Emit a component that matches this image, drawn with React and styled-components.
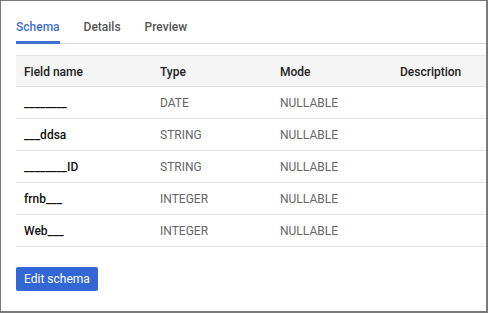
import styled, { createGlobalStyle } from "styled-components";

const GlobalStyle = createGlobalStyle`
  html, body {
    margin: 0;
    padding: 0;
    background: #fff;
  }
  body {
    font-family: Roboto, "Liberation Sans", Arial, sans-serif;
  }
`;

const Frame = styled.div`
  box-sizing: border-box;
  width: 488px;
  height: 313px;
  border: 1px solid #7a7a7a;
  border-right-width: 2px;
  border-bottom-width: 2px;
  padding: 0 0 0 15px;
  display: flex;
  flex-direction: column;
`;

const Tabs = styled.div`
  display: flex;
  gap: 24px;
  border-bottom: 1px solid #dadada;
  height: 43px;
  box-sizing: border-box;
`;

const Tab = styled.div`
  font-size: 12px;
  font-weight: 500;
  color: ${(p) => (p.$active ? "#3f6fd1" : "#555")};
  padding-top: 19px;
  border-bottom: 3px solid ${(p) => (p.$active ? "#3f6fd1" : "transparent")};
  margin-bottom: -1px;
  box-sizing: border-box;
`;

const Table = styled.div`
  margin-top: 11px;
  display: flex;
  flex-direction: column;
`;

const Row = styled.div`
  display: grid;
  grid-template-columns: 136px 120px 120px 1fr;
  height: 32px;
  align-items: center;
  padding-left: 8px;
  box-sizing: border-box;
  border-bottom: 1px solid #e2e2e2;
  background: ${(p) => (p.$head ? "#f5f5f5" : "#fff")};
  border-top: ${(p) => (p.$head ? "1px solid #e6e6e6" : "none")};
`;

const HeadCell = styled.div`
  font-size: 12px;
  font-weight: 500;
  color: #222;
  padding-top: 1px;
`;

const NameCell = styled.div`
  font-size: 12px;
  font-weight: 500;
  color: #111;
`;

const Cell = styled.div`
  font-size: 12px;
  color: #666;
`;

const Footer = styled.div`
  padding-top: 20px;
`;

const Button = styled.button`
  font-family: Roboto, "Liberation Sans", Arial, sans-serif;
  font-size: 12px;
  color: #fff;
  background: #3367d6;
  border: none;
  border-radius: 2px;
  height: 24px;
  padding: 0 8px;
  cursor: pointer;
`;

const fields = [
  { name: "________", type: "DATE", mode: "NULLABLE" },
  { name: "___ddsa", type: "STRING", mode: "NULLABLE" },
  { name: "________ID", type: "STRING", mode: "NULLABLE" },
  { name: "frnb___", type: "INTEGER", mode: "NULLABLE" },
  { name: "Web___", type: "INTEGER", mode: "NULLABLE" },
];

export default function App() {
  return (
    <>
      <GlobalStyle />
      <Frame>
        <Tabs>
          <Tab $active>Schema</Tab>
          <Tab>Details</Tab>
          <Tab>Preview</Tab>
        </Tabs>
        <Table>
          <Row $head>
            <HeadCell>Field name</HeadCell>
            <HeadCell>Type</HeadCell>
            <HeadCell>Mode</HeadCell>
            <HeadCell>Description</HeadCell>
          </Row>
          {fields.map((f, i) => (
            <Row key={i}>
              <NameCell>{f.name}</NameCell>
              <Cell>{f.type}</Cell>
              <Cell>{f.mode}</Cell>
              <Cell />
            </Row>
          ))}
        </Table>
        <Footer>
          <Button>Edit schema</Button>
        </Footer>
      </Frame>
    </>
  );
}
